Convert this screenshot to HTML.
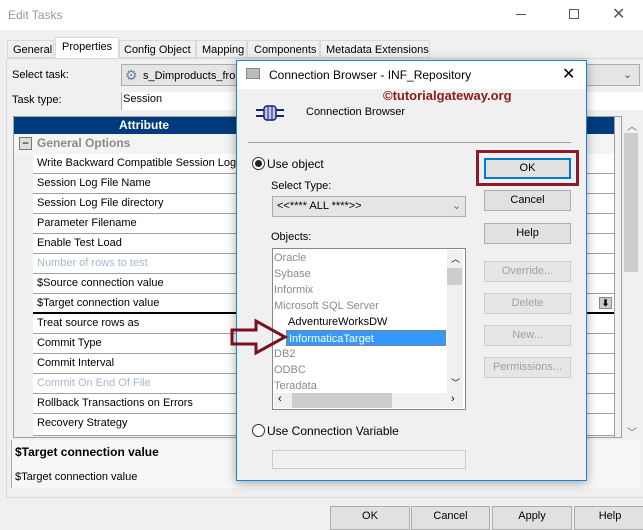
<!DOCTYPE html>
<html><head><style>
*{margin:0;padding:0;box-sizing:border-box}
body{width:643px;height:527px;overflow:hidden;background:#f0f0f0;font-family:"Liberation Sans",sans-serif;font-size:11px;color:#000;position:relative}
.a{position:absolute;white-space:nowrap}
.btn{position:absolute;background:#e1e1e1;border:1px solid #adadad;text-align:center;line-height:18px;font-size:11px}
.dis{color:#a0a0a0;border-color:#cfcfcf;background:#e6e6e6}
.row{position:absolute;left:33px;width:582px;height:20px;background:#fff;border-bottom:1px solid #a0a0a0;padding-left:4px;line-height:19px}
.li{position:absolute;left:274px;height:16px;line-height:16px;color:#8a8a8a}
</style></head><body>
<div class="a" style="left:0;top:0;width:643px;height:30px;background:#fff"></div>
<div class="a" style="left:8px;top:8px;font-size:12px;color:#999">Edit Tasks</div>
<div class="a" style="left:516px;top:14px;width:10px;border-top:1px solid #555"></div>
<div class="a" style="left:569px;top:9px;width:10px;height:10px;border:1px solid #555"></div>
<div class="a" style="left:612px;top:4px;font-size:16px;color:#555">✕</div>
<!-- tabs -->
<div class="a" style="left:7px;top:40px;width:47px;height:18px;border:1px solid #d9d9d9;background:#f0f0f0;padding:3px 5px">General</div>
<div class="a" style="left:55px;top:37px;width:64px;height:21px;border:1px solid #d9d9d9;border-bottom:none;background:#fff;padding:3px 6px">Properties</div>
<div class="a" style="left:119px;top:40px;width:77px;height:18px;border:1px solid #d9d9d9;padding:3px 4px">Config Object</div>
<div class="a" style="left:196px;top:40px;width:51px;height:18px;border:1px solid #d9d9d9;padding:3px 5px">Mapping</div>
<div class="a" style="left:247px;top:40px;width:73px;height:18px;border:1px solid #d9d9d9;padding:3px 6px">Components</div>
<div class="a" style="left:320px;top:40px;width:110px;height:18px;border:1px solid #d9d9d9;padding:3px 5px">Metadata Extensions</div>
<div class="a" style="left:6px;top:58px;width:637px;height:440px;border:1px solid #d9d9d9;border-right:none"></div>
<div class="a" style="left:12px;top:69px">Select task:</div>
<div class="a" style="left:121px;top:64px;width:519px;height:22px;background:#e5e5e5;border:1px solid #adadad"></div>
<div class="a" style="left:125px;top:67px;font-size:14px;color:#6a7ea0">⚙</div>
<div class="a" style="left:143px;top:70px">s_Dimproducts_from</div>
<div class="a" style="left:623px;top:68px;color:#555">⌄</div>
<div class="a" style="left:12px;top:94px">Task type:</div>
<div class="a" style="left:121px;top:92px;width:522px;height:18px;background:#fff;border-left:1px solid #adadad;padding:1px 0 0 1px">Session</div>
<!-- grid -->
<div class="a" style="left:13px;top:116px;width:609px;height:322px;border:1px solid #a0a0a0;background:#f0f0f0"></div>
<div class="a" style="left:14px;top:117px;width:601px;height:17px;background:#003c7d;color:#fff;font-weight:bold;font-size:12px;line-height:17px;padding-left:105px">Attribute</div>
<div class="a" style="left:14px;top:134px;width:601px;height:20px;background:#f4f4f4"></div>
<div class="a" style="left:19px;top:137px;width:13px;height:13px;border:1px solid #777;background:#ddd;font-size:12px;line-height:10px;text-align:center">−</div>
<div class="a" style="left:37px;top:136px;font-size:12px;font-weight:bold;color:#8a8a8a">General Options</div>
<div class="row" style="top:154px">Write Backward Compatible Session Log File</div>
<div class="row" style="top:174px">Session Log File Name</div>
<div class="row" style="top:194px">Session Log File directory</div>
<div class="row" style="top:214px">Parameter Filename</div>
<div class="row" style="top:234px">Enable Test Load</div>
<div class="row" style="top:254px;color:#a8b8d0">Number of rows to test</div>
<div class="row" style="top:274px">$Source connection value</div>
<div class="row" style="top:294px;border-bottom:2px solid #000">$Target connection value</div>
<div class="a" style="left:599px;top:297px;width:13px;height:12px;background:#ccc;border:1px solid #888;font-size:9px;text-align:center;line-height:10px;font-weight:bold">⬇</div>
<div class="row" style="top:314px">Treat source rows as</div>
<div class="row" style="top:334px">Commit Type</div>
<div class="row" style="top:354px">Commit Interval</div>
<div class="row" style="top:374px;color:#a8b8d0">Commit On End Of File</div>
<div class="row" style="top:394px">Rollback Transactions on Errors</div>
<div class="row" style="top:414px;height:22px">Recovery Strategy</div>
<div class="a" style="left:614px;top:117px;width:1px;height:320px;background:#a0a0a0"></div>
<div class="a" style="left:622px;top:116px;width:18px;height:322px;background:#f0f0f0"></div>
<div class="a" style="left:624px;top:133px;width:14px;height:139px;background:#cdcdcd"></div>
<div class="a" style="left:627px;top:118px;color:#666;font-size:10px">︿</div>
<div class="a" style="left:627px;top:424px;color:#666;font-size:10px">﹀</div>
<div class="a" style="left:11px;top:440px;width:629px;height:48px;background:#f7f7f7;border-left:1px solid #aaa"></div>
<div class="a" style="left:15px;top:445px;font-weight:bold;font-size:12px">$Target connection value</div>
<div class="a" style="left:15px;top:471px">$Target connection value</div>
<div class="btn" style="left:330px;top:506px;width:80px;height:24px">OK</div>
<div class="btn" style="left:411px;top:506px;width:79px;height:24px">Cancel</div>
<div class="btn" style="left:492px;top:506px;width:80px;height:24px">Apply</div>
<div class="btn" style="left:574px;top:506px;width:72px;height:24px">Help</div>
<!-- dialog -->
<div class="a" style="left:236px;top:60px;width:351px;height:421px;background:#f0f0f0;border:1px solid #1883d7;box-shadow:0 2px 10px rgba(0,0,0,.35)"></div>
<div class="a" style="left:237px;top:61px;width:349px;height:28px;background:#fff"></div>
<div class="a" style="left:246px;top:68px;width:14px;height:11px;background:#bbb;border:1px solid #888"></div>
<div class="a" style="left:269px;top:68px;font-size:12px">Connection Browser - INF_Repository</div>
<div class="a" style="left:562px;top:64px;font-size:16px">✕</div>
<div class="a" style="left:383px;top:88px;font-size:13px;font-weight:bold;color:#8b1a1a">©tutorialgateway.org</div>
<svg class="a" style="left:254px;top:104px" width="32" height="18"><path d="M2 6h8M2 12h8M22 6h8M22 12h8" stroke="#1a237e" stroke-width="2"/><rect x="10" y="2" width="12" height="14" rx="3" fill="#c0c8e0" stroke="#1a237e" stroke-width="1.5"/><path d="M14 1v16M18 1v16" stroke="#1a237e"/></svg>
<div class="a" style="left:306px;top:106px">Connection Browser</div>
<div class="a" style="left:248px;top:142px;width:323px;border-top:1px solid #a0a0a0"></div>
<div class="a" style="left:252px;top:157px;width:13px;height:13px;border:1px solid #333;border-radius:50%;background:#fff"></div>
<div class="a" style="left:255px;top:160px;width:7px;height:7px;border-radius:50%;background:#222"></div>
<div class="a" style="left:267px;top:157px;font-size:12px">Use object</div>
<div class="a" style="left:271px;top:180px">Select Type:</div>
<div class="a" style="left:272px;top:196px;width:194px;height:21px;background:#e5e5e5;border:1px solid #adadad;padding:3px 4px">&lt;&lt;**** ALL ****&gt;&gt;</div>
<div class="a" style="left:452px;top:199px;color:#666">⌄</div>
<div class="a" style="left:271px;top:231px">Objects:</div>
<div class="a" style="left:272px;top:248px;width:194px;height:162px;background:#fff;border:1px solid #828790"></div>
<div class="li" style="top:250px">Oracle</div>
<div class="li" style="top:266px">Sybase</div>
<div class="li" style="top:282px">Informix</div>
<div class="li" style="top:298px">Microsoft SQL Server</div>
<div class="li" style="top:314px;left:288px;color:#000">AdventureWorksDW</div>
<div class="li" style="top:330px;left:286px;width:160px;background:#3399ff;color:#fff;border:1px dotted #c07020;padding-left:2px">InformaticaTarget</div>
<div class="li" style="top:346px">DB2</div>
<div class="li" style="top:362px">ODBC</div>
<div class="li" style="top:378px">Teradata</div>
<div class="a" style="left:447px;top:250px;width:16px;height:143px;background:#f0f0f0"></div>
<div class="a" style="left:447px;top:268px;width:15px;height:17px;background:#cdcdcd"></div>
<div class="a" style="left:451px;top:252px;font-size:9px">︿</div>
<div class="a" style="left:451px;top:376px;font-size:9px">﹀</div>
<div class="a" style="left:274px;top:393px;width:189px;height:15px;background:#f0f0f0"></div>
<div class="a" style="left:292px;top:393px;width:100px;height:15px;background:#cdcdcd"></div>
<div class="a" style="left:278px;top:393px;font-size:11px">‹</div>
<div class="a" style="left:451px;top:393px;font-size:11px">›</div>
<svg class="a" style="left:230px;top:318px" width="60" height="38"><path d="M2 12H26V3L55 19L26 35V26H2Z" fill="none" stroke="#7a1020" stroke-width="3"/></svg>
<div class="a" style="left:476px;top:150px;width:103px;height:36px;border:3px solid #8b1a2a"></div>
<div class="btn" style="left:484px;top:158px;width:87px;height:21px;border:2px solid #0078d7;line-height:17px">OK</div>
<div class="btn" style="left:484px;top:190px;width:87px;height:21px">Cancel</div>
<div class="btn" style="left:484px;top:223px;width:87px;height:21px">Help</div>
<div class="btn dis" style="left:484px;top:261px;width:87px;height:21px">Override...</div>
<div class="btn dis" style="left:484px;top:293px;width:87px;height:21px">Delete</div>
<div class="btn dis" style="left:484px;top:325px;width:87px;height:21px">New...</div>
<div class="btn dis" style="left:484px;top:357px;width:87px;height:21px">Permissions...</div>
<div class="a" style="left:252px;top:424px;width:13px;height:13px;border:1px solid #333;border-radius:50%;background:#fff"></div>
<div class="a" style="left:267px;top:424px;font-size:12px">Use Connection Variable</div>
<div class="a" style="left:272px;top:450px;width:194px;height:19px;background:#f0f0f0;border:1px solid #ccc"></div>
</body></html>
